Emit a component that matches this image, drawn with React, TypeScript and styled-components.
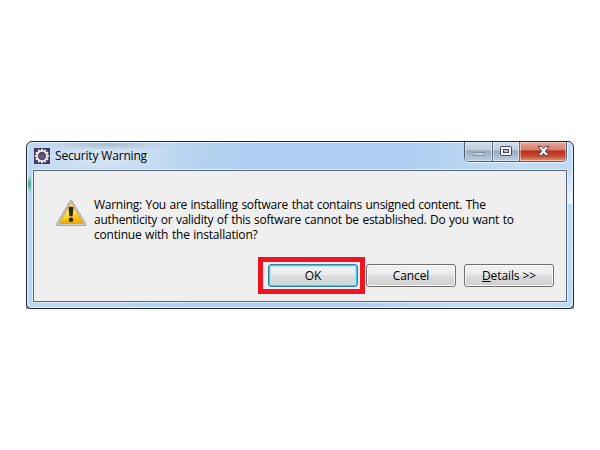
import React from "react";
import styled, { createGlobalStyle, css } from "styled-components";

const GlobalStyle = createGlobalStyle`
  * { box-sizing: border-box; }
  body { margin: 0; background: #fff; font: 12px/15px "Open Sans", sans-serif; color: #000; }
`;

const Desktop = styled.main`
  width: 600px;
  height: 450px;
  padding: 141px 26px;
`;

const Corners = styled.div`
  width: 548px;
  height: 168px;
  background: linear-gradient(#fff 50%, #8b8b8b 50%);
`;

const Window = styled.section`
  width: 548px;
  height: 168px;
  padding: 0 6px 6px;
  border: 1px solid #1d2631;
  border-radius: 6px 6px 5px 5px;
  box-shadow: inset 0 0 0 1px #e4f3ff;
  background:
    radial-gradient(ellipse 60px 6px at 82px 2px, #a9bdd0, #a9bdd000),
    radial-gradient(ellipse 85px 24px at 75px 15px, #d3e3f4 0 20%, #d3e3f400),
    linear-gradient(#3fa88500, #58ad93 40% 60%, #3fa88500) 1px 34px / 3px 16px no-repeat,
    linear-gradient(#fff0, #f4f9ff) 540px 28px / 6px 34px no-repeat,
    linear-gradient(110deg, #bcd6ef 0, #bcd7f1 125px, #adcef0 220px, #adcef0 360px, #c3dcf4 470px, #bdd9f7 100%);
`;

const TitleBar = styled.header`
  display: flex;
  height: 28px;
  padding-left: 1px;
`;

const TitleIcon = styled.svg`
  width: 16px;
  height: 16px;
  margin-top: 6px;
  flex: none;
`;

const Title = styled.h1`
  flex: 1;
  margin: 6px 0 0 5px;
  font-size: 12px;
  font-weight: 400;
  line-height: 16px;
  letter-spacing: -0.17px;
  white-space: nowrap;
`;

const CaptionButtons = styled.div`
  display: flex;
  width: 103px;
  height: 20px;
  border: 1px solid #4f5d70;
  border-top: 0;
  border-radius: 0 0 5px 5px;
  overflow: hidden;
  box-shadow: 0 1px 0 #e7f3ff, 1px 0 0 #e7f3ff;
`;

const CaptionButton = styled.button<{ $kind?: "minimize" | "close" }>`
  display: flex;
  align-items: center;
  justify-content: center;
  width: ${({ $kind }) => ($kind === "minimize" ? 28 : 27)}px;
  padding: 0;
  border: 0;
  border-right: 1px solid #617083;
  box-shadow: inset 0 0 0 1px #ffffff70;
  background: linear-gradient(#d0dce8 0, #bdcedd 43%, #96aabf 46%, #b8d0e5 100%);
  ${({ $kind }) =>
    $kind === "close" &&
    css`
      flex: 1;
      border-right: 0;
      background: linear-gradient(#e5a69a 0, #d57d6d 43%, #bc2d1b 46%, #c64a32 75%, #e59c7e 100%);
    `}
`;

const Content = styled.div`
  height: 132px;
  border: 1px solid #59687a;
  box-shadow: 0 0 0 1px #dcecfb;
  background: #efefef;
  padding: 26px 12px 0 22px;
`;

const MessageRow = styled.div`
  display: flex;
  align-items: flex-start;
  height: 60px;
`;

const WarningIcon = styled.svg`
  width: 32px;
  height: 32px;
  margin-top: 1px;
  flex: none;
`;

const Message = styled.p`
  margin: 0 0 0 6px;
  white-space: nowrap;
`;

const Line = styled.span<{ $spacing: number }>`
  display: block;
  height: 15px;
  letter-spacing: ${({ $spacing }) => $spacing}px;
  word-spacing: 0.7px;
`;

const ButtonRow = styled.footer`
  display: flex;
  justify-content: flex-end;
  align-items: center;
  height: 37px;
`;

const Highlight = styled.div`
  flex: none;
  width: 107px;
  height: 37px;
  padding: 2px 5px;
  border: 5px solid #ee1520;
`;

const Button = styled.button<{ $focused?: boolean }>`
  flex: none;
  display: block;
  width: 90px;
  height: 23px;
  padding: 0;
  border: 1px solid #707070;
  border-radius: 3px;
  box-shadow: inset 0 0 0 1px #fafafa;
  background: linear-gradient(#f2f2f2 0, #ebebeb 48%, #dddddd 50%, #cfcfcf 100%);
  font: 12px/19px "Open Sans", sans-serif;
  letter-spacing: -0.1px;
  color: #000;
  & + & { margin-left: 8px; }
  ${Highlight} + & { margin-left: 1px; }
  ${({ $focused }) =>
    $focused &&
    css`
      border-color: #397f9e;
      box-shadow: inset 0 0 0 1px #3dc5f2, inset 0 0 0 2px #b9e6f5;
    `}
`;

const TEETH = Array.from({ length: 12 }, (_, i) => i * 30);

export default function App() {
  return (
    <Desktop>
      <GlobalStyle />
      <Corners>
        <Window>
          <TitleBar>
            <TitleIcon viewBox="0 0 16 16">
              <rect width="16" height="16" fill="#453765" />
              <g fill="#f1eff4">
                {TEETH.map((a) => (
                  <rect key={a} x="7.1" y="0.8" width="1.8" height="3" transform={`rotate(${a} 8 8)`} />
                ))}
              </g>
              <circle cx="8" cy="8" r="5.1" fill="#514a68" stroke="#f1eff4" strokeWidth="1.7" />
              <path d="M4 8h8M4.5 10h7" stroke="#857b95" strokeWidth=".7" />
            </TitleIcon>
            <Title>Security Warning</Title>
            <CaptionButtons>
              <CaptionButton $kind="minimize" aria-label="Minimize">
                <svg width="13" height="12" viewBox="0 0 13 12">
                  <rect x="1.5" y="6.5" width="11" height="3" fill="#c6d0da" stroke="#8796a5" />
                </svg>
              </CaptionButton>
              <CaptionButton aria-label="Maximize">
                <svg width="12" height="12" viewBox="0 0 12 12">
                  <rect x=".5" y=".5" width="11" height="9" rx=".8" fill="#f5f5f5" stroke="#46495a" />
                  <rect x="3.5" y="3.5" width="5" height="3" fill="#a9bdd0" stroke="#46495a" />
                </svg>
              </CaptionButton>
              <CaptionButton $kind="close" aria-label="Close">
                <svg width="13" height="12" viewBox="0 0 13 12">
                  <path
                    d="M1 .5h3.5l2 2.2 2-2.2H12L8.4 5l3.6 4.5H8.5l-2-2.3-2 2.3H1L4.6 5z"
                    fill="#f6f6f6"
                    stroke="#524952"
                    strokeWidth="1"
                    strokeLinejoin="round"
                  />
                </svg>
              </CaptionButton>
            </CaptionButtons>
          </TitleBar>
          <Content>
            <MessageRow>
              <WarningIcon viewBox="0 0 32 32">
                <defs>
                  <linearGradient id="yellow" x2="0" y2="1">
                    <stop offset="0" stopColor="#fff06a" />
                    <stop offset=".5" stopColor="#ffd51b" />
                    <stop offset="1" stopColor="#eda900" />
                  </linearGradient>
                </defs>
                <path d="M15 3.5 29 26.5H1.5Z" fill="#b9b9bd" stroke="#a8a8ae" strokeWidth="3" strokeLinejoin="round" />
                <path d="M15 3.7 28.8 26.2H1.7Z" fill="#d9dadd" stroke="#d9dadd" strokeWidth="1" strokeLinejoin="round" />
                <path d="M15 4.5 27.5 25.5H3Z" fill="url(#yellow)" stroke="#d59b0b" strokeWidth=".7" strokeLinejoin="round" />
                <path d="M15 5.5 20.5 15 4.7 24.3Z" fill="#fff" opacity=".22" />
                <path d="M12.5 9.2q2.5-1.6 5 0l-.9 9h-3.2z" fill="#292721" />
                <circle cx="15" cy="21.8" r="2.2" fill="#292721" />
              </WarningIcon>
              <Message>
                <Line $spacing={-0.27}>Warning: You are installing software that contains unsigned content. The</Line>
                <Line $spacing={-0.25}>authenticity or validity of this software cannot be established. Do you want to</Line>
                <Line $spacing={-0.2}>continue with the installation?</Line>
              </Message>
            </MessageRow>
            <ButtonRow>
              <Highlight>
                <Button $focused>OK</Button>
              </Highlight>
              <Button>Cancel</Button>
              <Button>
                <u>D</u>etails &gt;&gt;
              </Button>
            </ButtonRow>
          </Content>
        </Window>
      </Corners>
    </Desktop>
  );
}
